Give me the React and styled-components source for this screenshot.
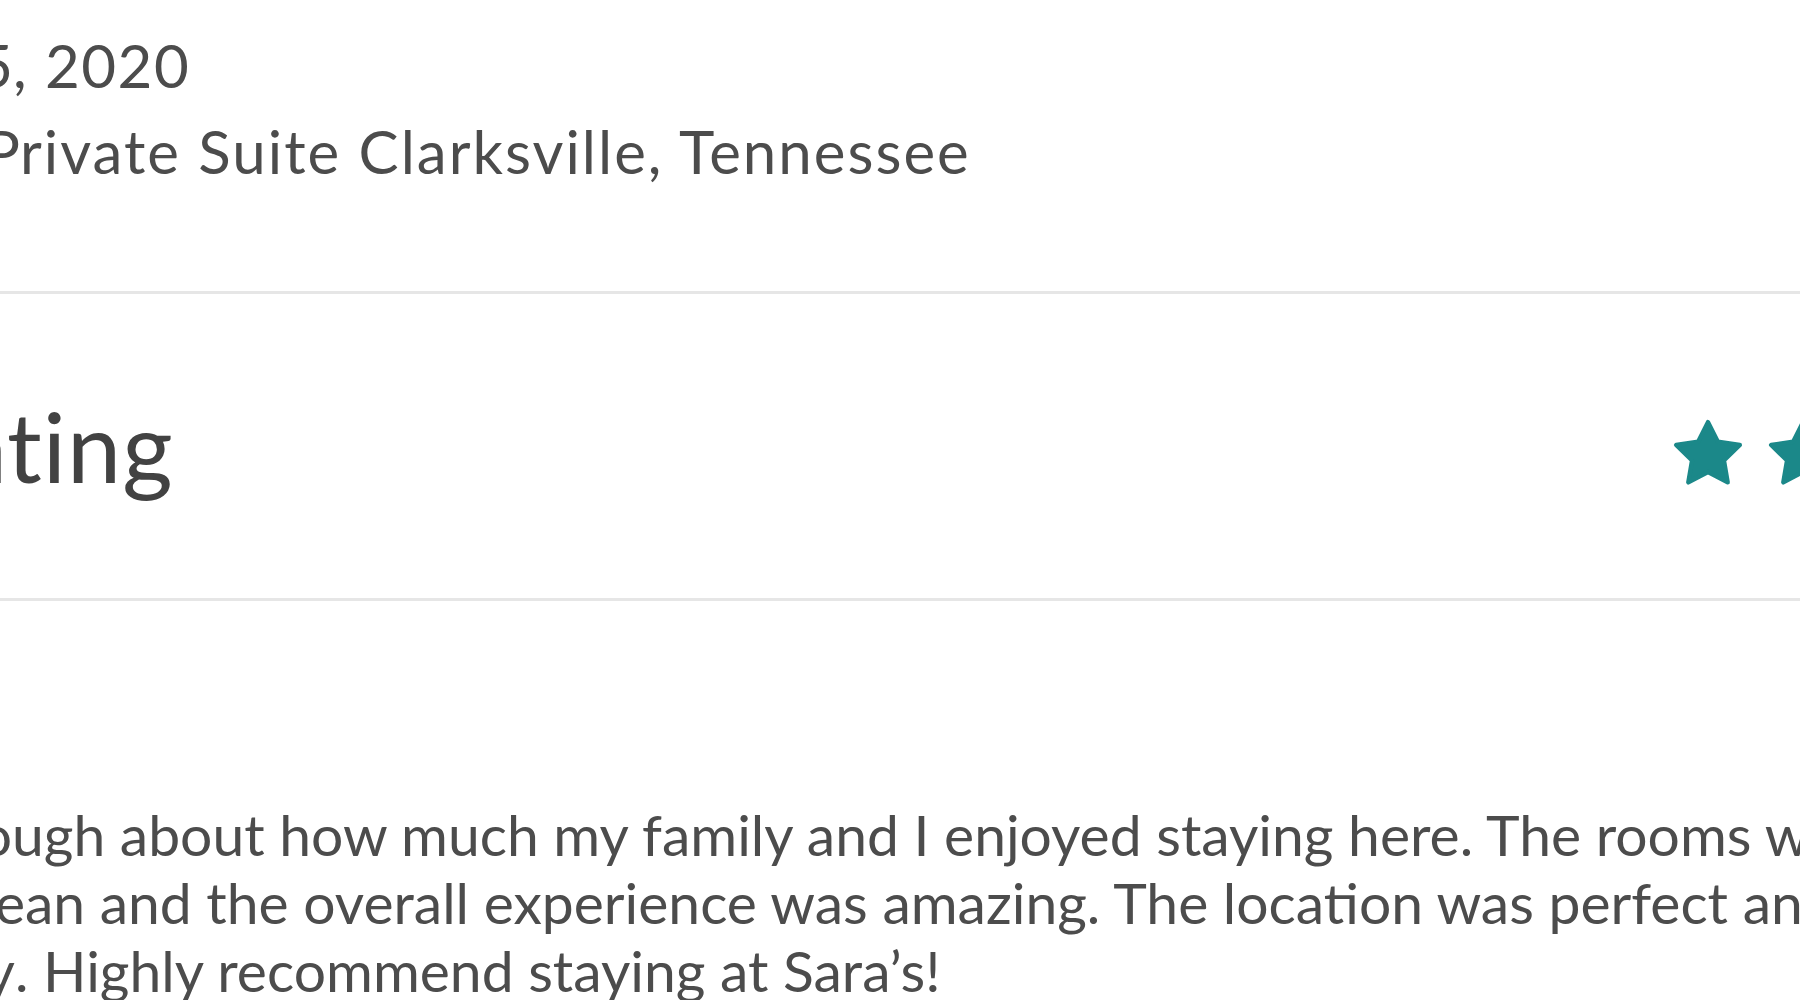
import React from "react";
import styled, { createGlobalStyle } from "styled-components";

const GlobalStyle = createGlobalStyle`
  html, body {
    margin: 0;
    padding: 0;
    background: #fff;
    overflow: hidden;
  }
  body {
    font-family: Lato, "Open Sans", sans-serif;
    color: #484848;
  }
`;

const stars = [1, 2, 3, 4, 5];

export default function App() {
  return (
    <>
      <GlobalStyle />
      <Page>
        <Column>
          <Header>
            <MetaLine $spacing={1.5}>
              <Cut $w={13}>Dec 5</Cut>, 2020
            </MetaLine>
            <MetaLine $spacing={2}>
              <Cut $w={20}>Sara’s P</Cut>rivate Suite Clarksville, Tennessee
            </MetaLine>
          </Header>

          <Divider />

          <RatingRow>
            <RatingTitle>
              <Cut $w={7}>Overall ra</Cut>ting
            </RatingTitle>
            <Stars>
              {stars.map((s) => (
                <Star key={s} />
              ))}
            </Stars>
          </RatingRow>

          <Divider />

          <Review>
            <ReviewLine>
              <Cut $w={12}>I can’t say eno</Cut>ugh about how much my family and I
              enjoyed staying here. The rooms were
            </ReviewLine>
            <ReviewLine>
              <Cut $w={25}>very cle</Cut>an and the overall experience was
              amazing. The location was perfect and
            </ReviewLine>
            <ReviewLine>
              <Cut $w={15}>friendly</Cut>. Highly recommend staying at Sara’s!
            </ReviewLine>
          </Review>
        </Column>
      </Page>
    </>
  );
}

function Star() {
  return (
    <StarIcon viewBox="1 1 22 22" aria-hidden="true">
      <polygon points="12,2.3 15.09,8.46 22,9.47 17,14.34 18.18,21.22 12,17.97 5.82,21.22 7,14.34 2,9.47 8.91,8.46" />
    </StarIcon>
  );
}

//
// Styled Components
//
const Page = styled.div`
  width: 1800px;
  height: 1000px;
  overflow: hidden;
  background: #fff;
`;

const Column = styled.div`
  width: 2123px;
  display: flex;
  flex-direction: column;
`;

const Cut = styled.span`
  display: inline-flex;
  justify-content: flex-end;
  width: ${(p) => p.$w}px;
  white-space: nowrap;
  vertical-align: top;
  letter-spacing: 0;
`;

const Header = styled.div`
  display: flex;
  flex-direction: column;
  gap: 14px;
  padding-top: 29px;
  height: 291px;
  box-sizing: border-box;
`;

const MetaLine = styled.div`
  font-size: 60px;
  line-height: 72px;
  letter-spacing: ${(p) => p.$spacing || 0}px;
  white-space: nowrap;
  color: #4c4c4c;
`;

const Divider = styled.div`
  height: 3px;
  background: #e6e6e6;
`;

const RatingRow = styled.div`
  display: flex;
  justify-content: space-between;
  align-items: flex-start;
  height: 304px;
  padding-top: 92px;
  box-sizing: border-box;
`;

const RatingTitle = styled.div`
  font-size: 97px;
  line-height: 120px;
  letter-spacing: 1px;
  white-space: nowrap;
  color: #424242;
`;

const Stars = styled.div`
  display: flex;
  gap: 25px;
  margin-top: 32px;
`;

const StarIcon = styled.svg`
  width: 70px;
  height: 70px;
  fill: #1b8889;
  stroke: #1b8889;
  stroke-width: 1.4;
  stroke-linejoin: round;
`;

const Review = styled.div`
  padding-top: 199px;
  display: flex;
  flex-direction: column;
`;

const ReviewLine = styled.div`
  font-size: 57px;
  line-height: 68px;
  white-space: nowrap;
  color: #4c4c4c;
`;
